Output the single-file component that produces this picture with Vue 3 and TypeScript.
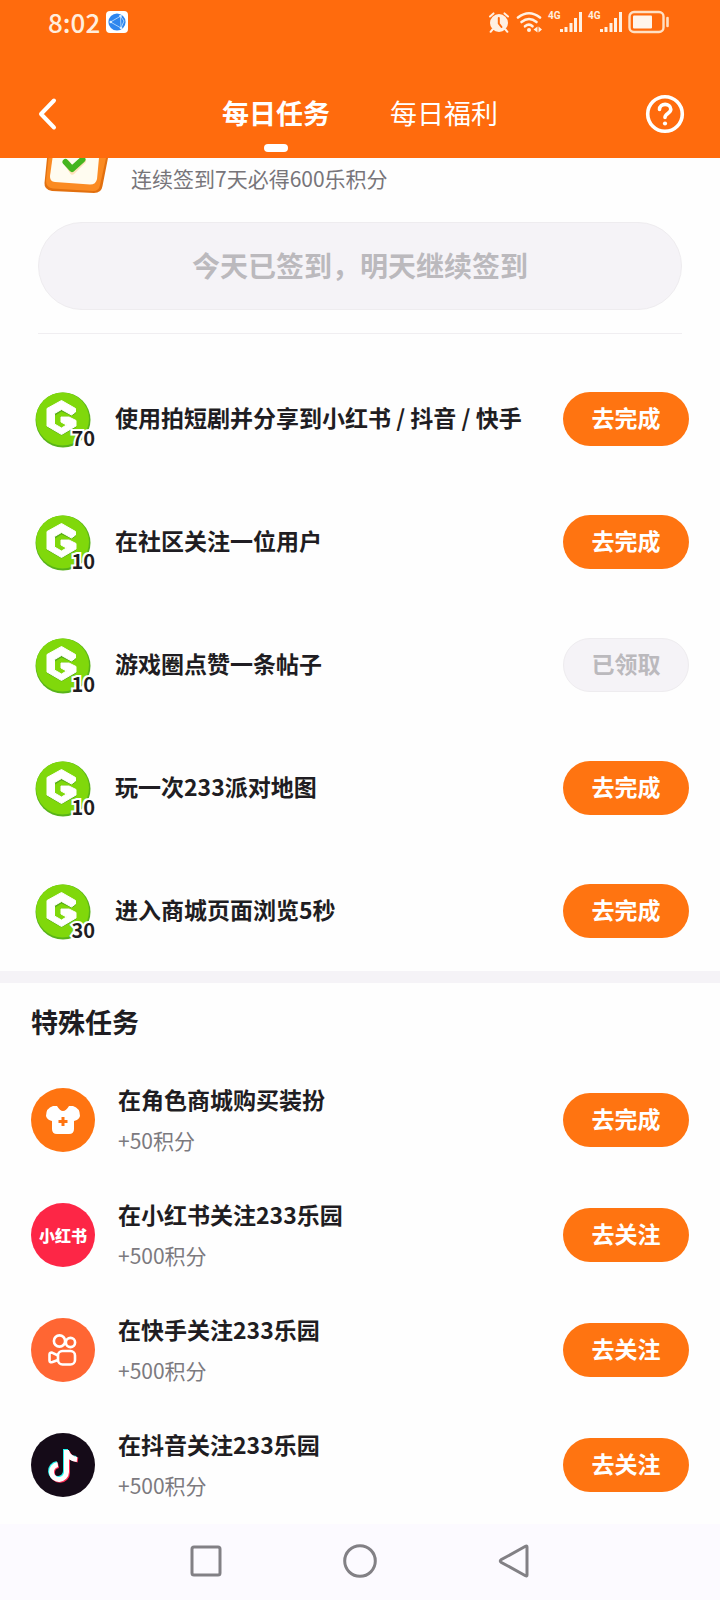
<script setup lang="ts">
import { ref } from 'vue'

interface DailyTask {
  title: string
  points: number
  done: boolean
}

interface SpecialTask {
  icon: 'shirt' | 'xhs' | 'kuaishou' | 'douyin'
  title: string
  reward: string
  action: string
}

const tabs = ['每日任务', '每日福利']
const activeTab = ref(0)

const dailyTasks: DailyTask[] = [
  { title: '使用拍短剧并分享到小红书 / 抖音 / 快手', points: 70, done: false },
  { title: '在社区关注一位用户', points: 10, done: false },
  { title: '游戏圈点赞一条帖子', points: 10, done: true },
  { title: '玩一次233派对地图', points: 10, done: false },
  { title: '进入商城页面浏览5秒', points: 30, done: false },
]

const specialTasks: SpecialTask[] = [
  { icon: 'shirt', title: '在角色商城购买装扮', reward: '+50积分', action: '去完成' },
  { icon: 'xhs', title: '在小红书关注233乐园', reward: '+500积分', action: '去关注' },
  { icon: 'kuaishou', title: '在快手关注233乐园', reward: '+500积分', action: '去关注' },
  { icon: 'douyin', title: '在抖音关注233乐园', reward: '+500积分', action: '去关注' },
]
</script>

<template>
  <div class="page">
    <header class="header">
      <div class="status">
        <div class="status-left">
          <span class="clock">8:02</span>
          <svg width="22" height="22" viewBox="0 0 22 22" aria-hidden="true">
            <rect width="22" height="22" rx="4" fill="#fff" />
            <circle cx="11" cy="11" r="8.6" fill="#2f86ee" />
            <path d="M4.5 11 14.5 5.2 15 17Z M14.5 5.2 18 10 15 17" fill="none" stroke="#a9d2fb" stroke-width="1" />
            <circle cx="4.8" cy="11" r="1.3" fill="#d8ecff" />
            <circle cx="14.5" cy="5" r="1.3" fill="#d8ecff" />
            <circle cx="15" cy="17" r="1.3" fill="#d8ecff" />
          </svg>
        </div>
        <div class="status-right">
          <svg width="22" height="22" viewBox="0 0 22 22" aria-hidden="true">
            <circle cx="11" cy="12" r="9" fill="#fff0e2" />
            <path d="M2 5.5 5.5 2.4M20 5.5 16.5 2.4M4.5 18.5 2.6 20.8M17.5 18.5 19.4 20.8" stroke="#fff0e2" stroke-width="2" stroke-linecap="round" />
            <path d="M10.8 7V12.5L13.5 16" fill="none" stroke="#ff6b0d" stroke-width="2" stroke-linecap="round" />
          </svg>
          <svg width="26" height="22" viewBox="0 0 26 22" aria-hidden="true">
            <g fill="none" stroke="#fff0e2" stroke-width="2.6" stroke-linecap="round">
              <path d="M2 6.5Q13-2 24 6.5" />
              <path d="M5.5 11Q13 5 20.5 11" />
              <path d="M9 15.3Q13 12 16.5 15.3" />
            </g>
            <circle cx="13" cy="19" r="2" fill="#fff0e2" />
            <path d="M21.5 15.5V21.5L17.5 18.5ZM22.5 15.5V21.5L26 18.5Z" fill="#fff0e2" />
          </svg>
          <div v-for="n in 2" :key="n" class="signal">
            <span>4G</span>
            <svg width="22" height="22" viewBox="0 0 22 22" aria-hidden="true">
              <path d="M1.5 18V21M6 16V21M11 12V21M15.500 7V21M20.500 1V21" stroke="#fff0e2" stroke-width="3" />
            </svg>
          </div>
          <svg width="42" height="24" viewBox="0 0 42 24" aria-hidden="true">
            <rect x="1.5" y="2" width="34" height="20" rx="4.5" fill="none" stroke="#ffe0c4" stroke-width="2.4" />
            <rect x="5" y="5.5" width="19" height="13" rx="1" fill="#fff5ec" />
            <path d="M39.5 8V16" stroke="#ffe0c4" stroke-width="2.6" stroke-linecap="round" />
          </svg>
        </div>
      </div>
      <nav class="nav">
        <button class="icon-btn" type="button" aria-label="返回">
          <svg width="22" height="34" viewBox="0 0 22 34" aria-hidden="true">
            <path d="M19 3.5 6 17 19 30.5" fill="none" stroke="#fff" stroke-width="4" stroke-linecap="round" stroke-linejoin="round" />
          </svg>
        </button>
        <div class="tabs" role="tablist">
          <button
            v-for="(tab, i) in tabs"
            :key="tab"
            class="tab"
            :class="{ active: activeTab === i }"
            type="button"
            role="tab"
            :aria-selected="activeTab === i"
            @click="activeTab = i"
          >
            {{ tab }}
          </button>
        </div>
        <button class="icon-btn help" type="button" aria-label="帮助">
          <svg width="40" height="40" viewBox="0 0 40 40" aria-hidden="true">
            <circle cx="20" cy="20" r="17.3" fill="none" stroke="#fff" stroke-width="3.6" />
            <path d="M14.5 15.5C14.5 8.5 25.8 8.8 25.8 15.3C25.8 19.5 20 19.5 20 23.500" fill="none" stroke="#fff" stroke-width="3.6" stroke-linecap="round" />
            <circle cx="20" cy="29.5" r="2.1" fill="#fff" />
          </svg>
        </button>
      </nav>
    </header>

    <main class="content">
      <section class="checkin">
        <div class="checkin-info">
          <svg width="66" height="36" viewBox="0 0 66 36" aria-hidden="true">
            <path d="M3 0 .5 25Q0 31.500 8 33L50 35Q57.500 35 58.500 28L64 0Z" fill="#e2700f" />
            <path d="M4.500 0 2 23Q2 29.500 9 30.500L49 33Q55 33 56 27L62 0Z" fill="#fb8b22" />
            <path d="M8.500 0 6 18Q5.500 23.500 11 24L46 26.500Q52 26.500 53 21L55 0Z" fill="#fffcf0" />
            <path d="M23 5 28.500 13.500 39 3" fill="none" stroke="#ffe2ba" stroke-width="6" stroke-linecap="round" stroke-linejoin="round" />
            <path d="M21.500 4 28 11 38.500 1.500" fill="none" stroke="#45b51f" stroke-width="6" stroke-linecap="round" stroke-linejoin="round" />
          </svg>
          <p class="checkin-text">连续签到7天必得600乐积分</p>
        </div>
        <button class="checkin-btn" type="button" disabled>今天已签到，明天继续签到</button>
      </section>

      <ul class="daily">
        <li v-for="task in dailyTasks" :key="task.title" class="daily-row">
          <div class="coin">
            <svg width="56" height="57" viewBox="0 0 56 57" aria-hidden="true">
              <circle cx="28" cy="29" r="27.500" fill="#58b31a" />
              <circle cx="27.500" cy="28" r="26.500" fill="#80d80b" />
              <path d="M26.500 10 40.500 18.500V22.500L36.500 25L26.500 20.500 20 24.500V33L26.500 37 32.500 33.500 26.500 30V25.500H33L41 30V36.500L26.500 44.500 12.500 36.500V18.500Z" fill="#58ad19" />
              <path d="M26.500 9.500 40.500 17.500V21L36.500 24L26.500 18.500 19.500 22.500V33L26.500 37 31.500 34 26 31V26H34L41 29.500V35L26.500 43.500 12 35V17.500Z" fill="#fff" stroke="#fff" stroke-width="1" stroke-linejoin="round" />
            </svg>
            <span class="coin-points">{{ task.points }}</span>
          </div>
          <h3 class="title grow">{{ task.title }}</h3>
          <button class="action" type="button" :disabled="task.done">
            {{ task.done ? '已领取' : '去完成' }}
          </button>
        </li>
      </ul>

      <section class="special">
        <h2 class="section-title">特殊任务</h2>
        <ul class="special-list">
          <li v-for="task in specialTasks" :key="task.title" class="special-row">
            <div class="logo" :class="task.icon">
              <svg v-if="task.icon === 'shirt'" width="64" height="64" viewBox="0 0 64 64" aria-hidden="true">
                <path d="M22 18H26Q29 23 32 23Q35 23 38 18H42Q49 20 49 28Q48 32 43 33V41Q43 46 38 46H26Q21 46 21 41V33Q16 32 15 28Q15 20 22 18Z" fill="#fff" />
                <path d="M32 29V38M27.5 33.5H36.5" stroke="#ff7411" stroke-width="3" />
              </svg>
              <span v-else-if="task.icon === 'xhs'" class="xhs-text">小红书</span>
              <svg v-else-if="task.icon === 'kuaishou'" width="64" height="64" viewBox="0 0 64 64" aria-hidden="true">
                <g fill="none" stroke="#fff" stroke-width="2.6" stroke-linejoin="round">
                  <circle cx="28.500" cy="23" r="5.600" />
                  <circle cx="39.500" cy="24.500" r="4.600" />
                  <rect x="27" y="33" width="17" height="13.500" rx="4.500" />
                  <path d="M27 37.500 21.500 34.800Q18.500 34 18.500 36.500V42.500Q18.500 45 21.500 44L27 42" />
                </g>
              </svg>
              <svg v-else width="64" height="64" viewBox="0 0 64 64" aria-hidden="true">
                <g fill="none" stroke-width="5">
                  <path d="M34.500 16V38A7.500 7.500 0 1 1 26 30.500M34.500 17Q36 24.500 45 25.500" stroke="#25f4ee" />
                  <path d="M36.500 18V40A7.500 7.500 0 1 1 27.500 32.500M36.500 19Q39 26 47 27" stroke="#fe2c55" />
                  <path d="M35.500 17V39A7.500 7.500 0 1 1 26.800 31.500M35.500 18Q37.500 25.500 46 26.500" stroke="#fff" />
                </g>
              </svg>
            </div>
            <div class="grow">
              <h3 class="title">{{ task.title }}</h3>
              <p class="reward">{{ task.reward }}</p>
            </div>
            <button class="action" type="button">{{ task.action }}</button>
          </li>
        </ul>
      </section>
    </main>

    <footer class="system-nav">
      <button type="button" aria-label="最近任务">
        <svg width="34" height="34" viewBox="0 0 34 34" aria-hidden="true">
          <rect x="3" y="3" width="28" height="28" rx="2" />
        </svg>
      </button>
      <button type="button" aria-label="主屏幕">
        <svg width="34" height="34" viewBox="0 0 34 34" aria-hidden="true">
          <circle cx="17" cy="17" r="15.300" />
        </svg>
      </button>
      <button type="button" aria-label="返回上一页">
        <svg width="34" height="34" viewBox="0 0 34 34" aria-hidden="true">
          <path d="M30 3Q30 1.500 28.500 2.300L4 15.800Q2.500 17 4 18.200L28.500 31.700Q30 32.500 30 31Z" />
        </svg>
      </button>
    </footer>
  </div>
</template>

<style>
body {
  background: #fefefe;
}
</style>

<style scoped>
.page {
  display: flex;
  flex-direction: column;
  min-height: 100vh;
  background: #fefefe;
  color: #1f1d22;
  font-family: "Noto Sans CJK SC", "Noto Sans", sans-serif;
}

button {
  padding: 0;
  border: 0;
  background: none;
  font-family: inherit;
  color: inherit;
}

svg {
  display: block;
}

h2,
h3,
p,
ul {
  margin: 0;
  padding: 0;
  list-style: none;
}

.header {
  background: #ff6b0d;
  color: #fff;
}

.status {
  display: flex;
  align-items: center;
  justify-content: space-between;
  height: 44px;
  padding: 0 50px 0 48px;
}

.status-left,
.status-right {
  display: flex;
  align-items: center;
  gap: 6px;
}

.clock {
  color: #ffeedd;
  font-size: 26px;
  font-weight: 500;
  line-height: 40px;
}

.signal {
  display: flex;
  align-items: flex-start;
  width: 34px;
}

.signal span {
  width: 12px;
  color: #ffeedd;
  font-family: Roboto, sans-serif;
  font-size: 10px;
  font-weight: 700;
  line-height: 10px;
}

.nav {
  display: grid;
  grid-template-columns: 1fr auto 1fr;
  align-items: center;
  height: 114px;
  padding: 26px 35px 0;
  box-sizing: border-box;
}

.icon-btn {
  justify-self: start;
}

.icon-btn.help {
  justify-self: end;
}

.tabs {
  display: flex;
  gap: 60px;
}

.tab {
  position: relative;
  height: 88px;
  padding-bottom: 4px;
  font-size: 27px;
}

.tab.active {
  font-weight: 700;
}

.tab.active::after {
  content: "";
  position: absolute;
  bottom: 6px;
  left: 50%;
  width: 24px;
  height: 8px;
  margin-left: -12px;
  border-radius: 4px;
  background: #fff;
}

.content {
  flex: 1;
}

.checkin {
  margin: 0 38px;
  padding-bottom: 23px;
  border-bottom: 1px solid #f0eef1;
}

.checkin-info {
  display: flex;
  align-items: flex-start;
  gap: 21px;
  height: 64px;
  padding-left: 6px;
}

.checkin-text {
  color: #77757a;
  font-size: 21px;
  line-height: 40px;
}

.checkin-btn {
  display: block;
  width: 100%;
  height: 88px;
  padding-bottom: 2px;
  border: 1px solid #eeecef;
  border-radius: 44px;
  background: #f5f3f7;
  color: #bbb9bd;
  font-size: 28px;
  font-weight: 700;
}

.daily {
  display: flex;
  flex-direction: column;
  gap: 67px;
  padding: 57px 31px 32px 35px;
  border-bottom: 12px solid #f5f3f7;
}

.daily-row {
  display: flex;
  align-items: center;
  height: 56px;
}

.coin {
  position: relative;
  width: 56px;
  margin-right: 24px;
}

.coin-points {
  position: absolute;
  right: -4px;
  bottom: -2px;
  font-size: 20px;
  font-weight: 700;
  line-height: 24px;
  -webkit-text-stroke: 4px #fff;
  paint-order: stroke fill;
}

.grow {
  flex: 1;
}

.title {
  padding-bottom: 4px;
  font-size: 23px;
  font-weight: 700;
  line-height: 36px;
}

.action {
  width: 126px;
  height: 54px;
  padding-bottom: 4px;
  border-radius: 27px;
  background: #ff7411;
  color: #fff;
  font-size: 23px;
  font-weight: 700;
}

.action:disabled {
  border: 1px solid #eeecef;
  background: #f5f3f7;
  color: #bbb9bd;
}

.special {
  padding: 19px 31px 17px;
}

.section-title {
  font-size: 27px;
  font-weight: 700;
  line-height: 40px;
}

.special-list {
  display: flex;
  flex-direction: column;
  gap: 35px;
  padding-top: 38px;
}

.special-row {
  display: flex;
  align-items: center;
  height: 80px;
}

.logo {
  display: flex;
  align-items: center;
  justify-content: center;
  width: 64px;
  height: 64px;
  margin-right: 23px;
  border-radius: 50%;
}

.shirt {
  background: #ff7411;
}

.xhs {
  background: #fd2646;
}

.kuaishou {
  background: #ff6633;
}

.douyin {
  background: #150b18;
}

.xhs-text {
  color: #fff;
  font-size: 16px;
  font-weight: 900;
  white-space: nowrap;
}

.reward {
  color: #7c7a7f;
  font-size: 21px;
  line-height: 38px;
}

.system-nav {
  display: flex;
  align-items: center;
  justify-content: center;
  gap: 120px;
  height: 76px;
  padding-bottom: 2px;
  box-sizing: border-box;
  background: #fcfaff;
}

.system-nav svg {
  fill: none;
  stroke: #828085;
  stroke-width: 3px;
}
</style>
